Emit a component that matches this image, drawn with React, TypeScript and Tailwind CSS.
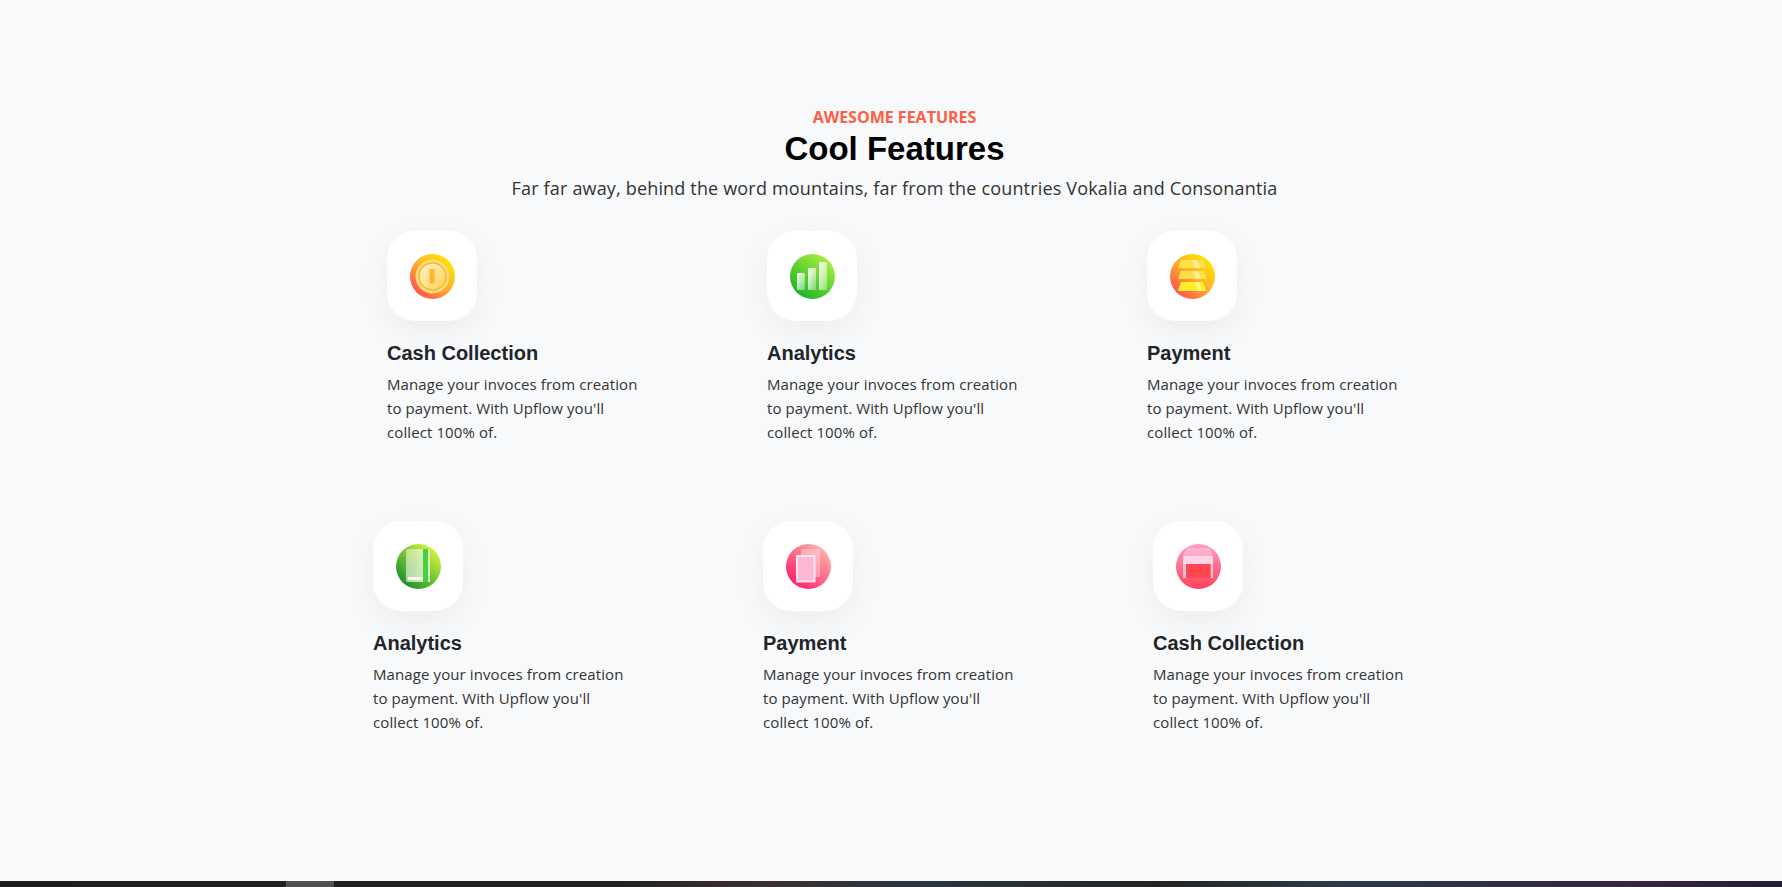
type Feature = {
  title: string
  icon: React.ReactNode
}

const bodyFont = "font-['Open_Sans','Noto_Sans',sans-serif]"

function Coin() {
  return (
    <svg width="45" height="45" viewBox="0 0 45 45">
      <defs>
        <linearGradient id="coinBg" x1="0.85" y1="0.1" x2="0.15" y2="0.9">
          <stop offset="0" stopColor="#ffe600" />
          <stop offset="0.5" stopColor="#ffae2c" />
          <stop offset="1" stopColor="#ff4f4f" />
        </linearGradient>
        <linearGradient id="coinIn" x1="0.2" y1="0.2" x2="0.8" y2="0.8">
          <stop offset="0" stopColor="#ffeeb8" />
          <stop offset="1" stopColor="#ffd768" />
        </linearGradient>
      </defs>
      <circle cx="22.5" cy="22.5" r="22.5" fill="url(#coinBg)" />
      <circle cx="22.5" cy="22.5" r="17" fill="#ffdc80" />
      <circle cx="22.5" cy="22.5" r="13.5" fill="url(#coinIn)" stroke="#ffb52e" strokeWidth="1.5" />
      <rect x="19.5" y="15" width="5" height="14.5" rx="0.5" fill="#ffb52e" />
    </svg>
  )
}

function Bars() {
  return (
    <svg width="45" height="45" viewBox="0 0 45 45">
      <defs>
        <linearGradient id="barBg" x1="0.8" y1="0.1" x2="0.2" y2="0.9">
          <stop offset="0" stopColor="#a8ee3c" />
          <stop offset="1" stopColor="#1fb52a" />
        </linearGradient>
        <linearGradient id="barFill" x1="0" y1="0" x2="1" y2="1">
          <stop offset="0" stopColor="#ffffff" stopOpacity="0.95" />
          <stop offset="1" stopColor="#ffffff" stopOpacity="0.3" />
        </linearGradient>
      </defs>
      <circle cx="22.5" cy="22.5" r="22.5" fill="url(#barBg)" />
      <rect x="7" y="19" width="8" height="17" rx="1" fill="url(#barFill)" />
      <rect x="18" y="14" width="8" height="22" rx="1" fill="url(#barFill)" />
      <rect x="29" y="8" width="8" height="28" rx="1" fill="url(#barFill)" />
    </svg>
  )
}

function Stack() {
  return (
    <svg width="45" height="45" viewBox="0 0 45 45">
      <defs>
        <linearGradient id="stackBg" x1="0.85" y1="0.1" x2="0.15" y2="0.9">
          <stop offset="0" stopColor="#ffe600" />
          <stop offset="0.5" stopColor="#ffae2c" />
          <stop offset="1" stopColor="#ff4f4f" />
        </linearGradient>
      </defs>
      <circle cx="22.5" cy="22.5" r="22.5" fill="url(#stackBg)" />
      <path d="M11 6h22l3 8H8z" fill="#ffe04a" />
      <path d="M11 17h23l3 8H8z" fill="#ffe04a" />
      <path d="M11 28h22l3 9H8z" fill="#fff02c" />
      <path d="M22 6h5l3 8h-5zM23 17h5l3 8h-5zM25 28h4l3 9h-4z" fill="#ffffff" fillOpacity="0.45" />
    </svg>
  )
}

function Book() {
  return (
    <svg width="45" height="45" viewBox="0 0 45 45">
      <defs>
        <linearGradient id="bookBg" x1="0.85" y1="0.1" x2="0.15" y2="0.9">
          <stop offset="0" stopColor="#d4f53c" />
          <stop offset="1" stopColor="#178f2e" />
        </linearGradient>
        <linearGradient id="bookFill" x1="0" y1="0" x2="1" y2="1">
          <stop offset="0" stopColor="#ffffff" stopOpacity="0.45" />
          <stop offset="1" stopColor="#ffffff" stopOpacity="0.75" />
        </linearGradient>
      </defs>
      <circle cx="22.5" cy="22.5" r="22.5" fill="url(#bookBg)" />
      <path d="M12 5h22v33H12q-2 0-2-2V7q0-2 2-2z" fill="url(#bookFill)" />
      <rect x="12" y="33" width="15" height="3" fill="#f6ffe0" />
      <rect x="27" y="5" width="5" height="33" fill="#45d044" />
    </svg>
  )
}

function Pages() {
  return (
    <svg width="45" height="45" viewBox="0 0 45 45">
      <defs>
        <linearGradient id="pagesBg" x1="0.85" y1="0.1" x2="0.15" y2="0.9">
          <stop offset="0" stopColor="#ffb0a8" />
          <stop offset="1" stopColor="#ff1f6a" />
        </linearGradient>
      </defs>
      <circle cx="22.5" cy="22.5" r="22.5" fill="url(#pagesBg)" />
      <rect x="15" y="5" width="19" height="28" fill="#ffffff" fillOpacity="0.35" />
      <rect x="11" y="12" width="17.5" height="25.5" fill="#ffb8d4" stroke="#ffe6ef" strokeWidth="2" />
    </svg>
  )
}

function Shop() {
  return (
    <svg width="45" height="45" viewBox="0 0 45 45">
      <defs>
        <linearGradient id="shopBg" x1="0.5" y1="0" x2="0.5" y2="1">
          <stop offset="0" stopColor="#ff9ec8" />
          <stop offset="1" stopColor="#ff4058" />
        </linearGradient>
      </defs>
      <circle cx="22.5" cy="22.5" r="22.5" fill="url(#shopBg)" />
      <path d="M11 4h23l3 8H7z" fill="#ffffff" fillOpacity="0.3" />
      <rect x="7" y="12" width="30" height="8" fill="#ffd6e8" />
      <rect x="7" y="20" width="3" height="14" fill="#ffc2d8" />
      <rect x="34.5" y="20" width="2.5" height="14" fill="#ffc2d8" />
      <rect x="10" y="20" width="24.5" height="14" fill="#ff4650" />
    </svg>
  )
}

function FeatureCard({ title, icon }: Feature) {
  return (
    <div>
      <div className="flex h-[90px] w-[90px] items-center justify-center rounded-[28px] bg-white shadow-[0_10px_30px_rgba(0,0,0,0.05)]">
        {icon}
      </div>
      <h3 className="mt-[20px] font-['Liberation_Sans',sans-serif] text-[20px] font-bold leading-[24px] text-[#212529]">
        {title}
      </h3>
      <p className={`mt-[7px] w-[270px] text-[15px] leading-[24px] tracking-[0.1px] text-[#333] ${bodyFont}`}>
        Manage your invoces from creation
        <br />
        to payment. With Upflow you'll
        <br />
        collect 100% of.
      </p>
    </div>
  )
}

const rowOne: Feature[] = [
  { title: 'Cash Collection', icon: <Coin /> },
  { title: 'Analytics', icon: <Bars /> },
  { title: 'Payment', icon: <Stack /> },
]

const rowTwo: Feature[] = [
  { title: 'Analytics', icon: <Book /> },
  { title: 'Payment', icon: <Pages /> },
  { title: 'Cash Collection', icon: <Shop /> },
]

export default function App() {
  return (
    <div className="flex h-[887px] flex-col overflow-hidden bg-[#f8f9fb]">
      <main className="flex-1 pt-[107px]">
        <div className="pl-[7px] text-center">
          <p className={`text-[16px] font-bold leading-[20px] text-[#ff5e45] ${bodyFont}`}>AWESOME FEATURES</p>
          <h2 className="mt-[2px] font-['Liberation_Sans',sans-serif] text-[33px] font-bold leading-[40px] text-black">
            Cool Features
          </h2>
          <p className={`mt-[5px] text-[18px] leading-[28px] tracking-[0.17px] text-[#333] ${bodyFont}`}>
            Far far away, behind the word mountains, far from the countries Vokalia and Consonantia
          </p>
        </div>
        <div className="mt-[29px] flex justify-center">
          {rowOne.map((f) => (
            <div key={f.title} className="w-[380px] pl-[66px]">
              <FeatureCard {...f} />
            </div>
          ))}
        </div>
        <div className="mt-[77px] flex justify-center">
          {rowTwo.map((f) => (
            <div key={f.title} className="w-[390px] pl-[67px]">
              <FeatureCard {...f} />
            </div>
          ))}
        </div>
      </main>
      <div className="h-[6px] bg-[linear-gradient(90deg,#1d1d1d_0%,#222_35%,#3a2f30_42%,#2c3640_52%,#242424_65%,#2c3a46_75%,#35263c_92%,#241f33_100%)]">
        <div className="ml-[286px] h-full w-[48px] bg-[#505050]" />
      </div>
    </div>
  )
}
